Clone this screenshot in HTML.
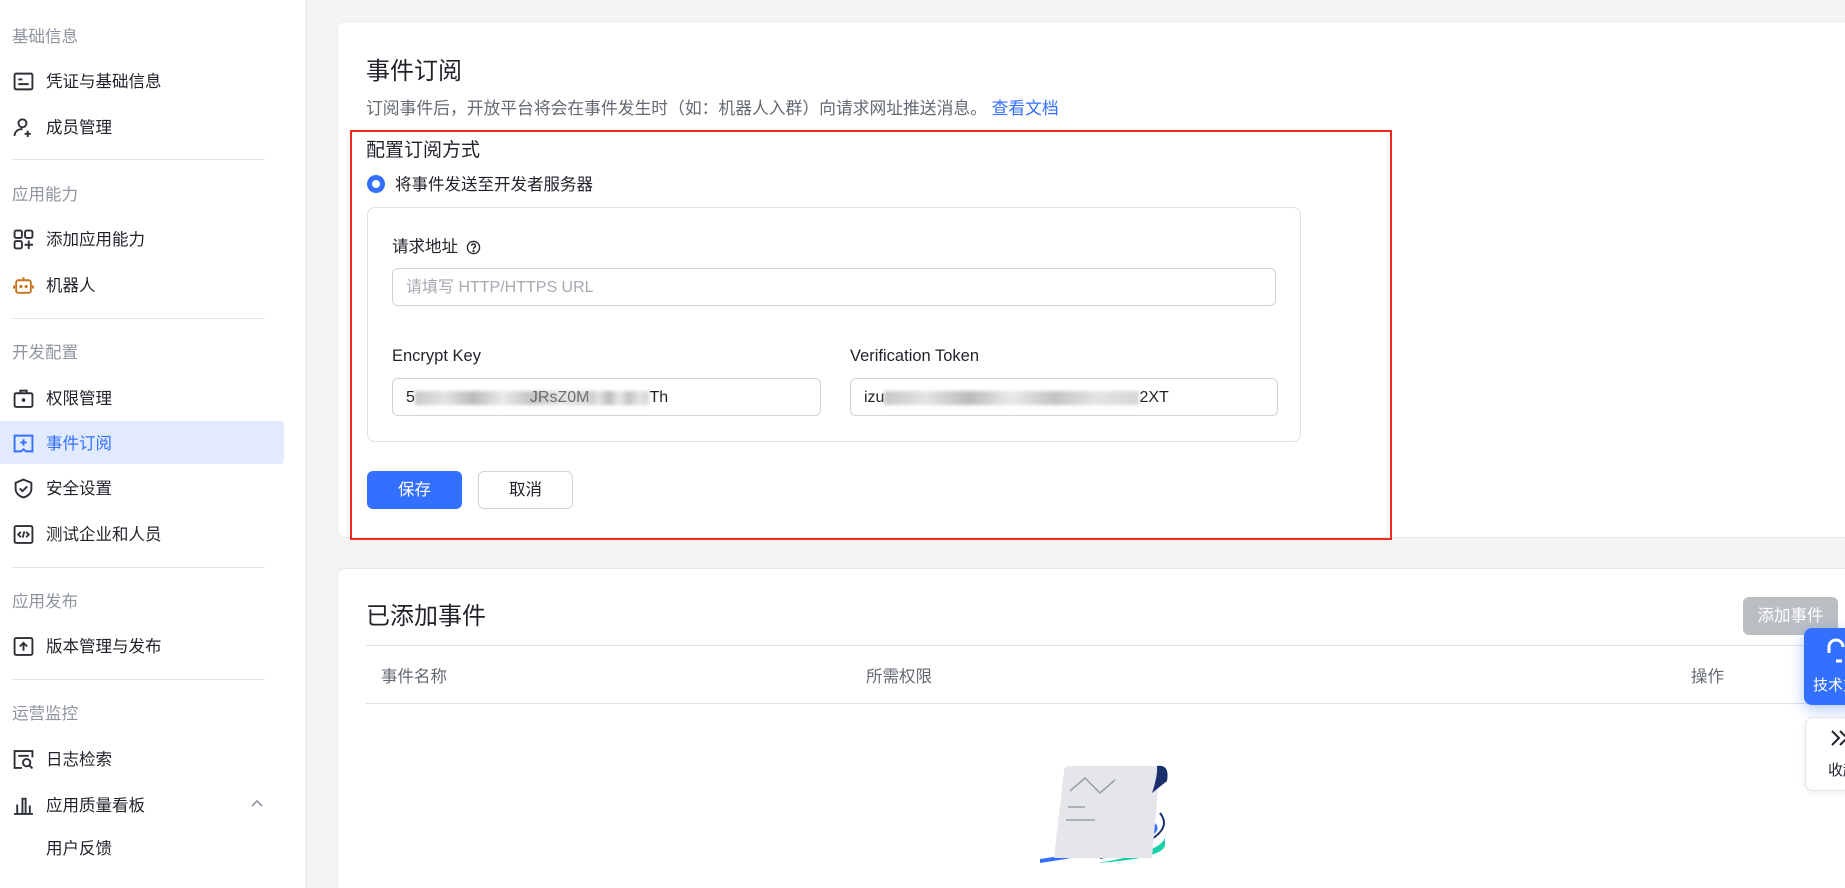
<!DOCTYPE html>
<html><head><meta charset="utf-8"><style>
*{margin:0;padding:0;box-sizing:border-box}
html,body{width:1845px;height:888px;overflow:hidden}
body{background:#f3f4f6;font-family:"Liberation Sans","Noto Sans CJK SC",sans-serif;color:#1f2329}
#root{position:relative;width:1845px;height:888px;overflow:hidden}
.abs{position:absolute}
#side{position:absolute;left:0;top:0;width:307px;height:888px;background:#fff;border-right:1px solid #e4e5e7}
.grp{position:absolute;left:12px;font-size:16.5px;color:#8f959e;line-height:20px}
.it{position:absolute;left:46px;font-size:16.5px;color:#1f2329;line-height:20px}
.ic{position:absolute;left:13px;width:21px;height:21px}
.div{position:absolute;left:12px;width:253px;height:1px;background:#e4e5e7}
.card{position:absolute;left:337px;width:1520px;background:#fff;border:1px solid #e8e9eb;border-radius:8px}
.inp{position:absolute;height:38px;border:1px solid #d0d3d6;border-radius:6px;background:#fff;font-size:16px;line-height:38px;padding-left:13px;color:#1f2329}
.blur{display:inline-block;height:14px;vertical-align:middle;background:linear-gradient(90deg,#bbb,#ddd,#aaa,#e5e5e5,#b5b5b5,#ddd,#ccc);filter:blur(1.5px);opacity:.8}
</style></head><body><div id="root">
<div id="side">
<div class="grp" style="top:27px">基础信息</div>
<svg class="ic" style="top:71px" viewBox="0 0 20 20" fill="none" stroke="#2b2f36" stroke-width="1.8"><rect x="1.5" y="2.5" width="17" height="15" rx="1.5"/><path d="M5 8h4M5 12.5h10"/></svg>
<div class="it" style="top:72px">凭证与基础信息</div>
<svg class="ic" style="top:117px" viewBox="0 0 20 20" fill="none" stroke="#2b2f36" stroke-width="1.8"><circle cx="9" cy="6" r="3.8"/><path d="M1.5 18c0-4 3-6.5 7.5-6.5M14 13v6M11 16h6"/></svg>
<div class="it" style="top:118px">成员管理</div>
<div class="div" style="top:159px"></div>
<div class="grp" style="top:185px">应用能力</div>
<svg class="ic" style="top:229px" viewBox="0 0 20 20" fill="none" stroke="#2b2f36" stroke-width="1.8"><rect x="1.5" y="1.5" width="7" height="7" rx="1.5"/><rect x="11.5" y="1.5" width="7" height="7" rx="1.5"/><rect x="1.5" y="11.5" width="7" height="7" rx="1.5"/><path d="M15 11v8M11 15h8"/></svg>
<div class="it" style="top:230px">添加应用能力</div>
<svg class="ic" style="top:275px" viewBox="0 0 20 20" fill="none" stroke="#c6731c" stroke-width="1.8"><rect x="3" y="5" width="14" height="12" rx="2"/><path d="M10 2v3M1 10v3M19 10v3"/><circle cx="7.5" cy="11" r=".6" fill="#c6731c"/><circle cx="12.5" cy="11" r=".6" fill="#c6731c"/></svg>
<div class="it" style="top:276px">机器人</div>
<div class="div" style="top:318px"></div>
<div class="grp" style="top:343px">开发配置</div>
<svg class="ic" style="top:388px" viewBox="0 0 20 20" fill="none" stroke="#2b2f36" stroke-width="1.8"><rect x="1.5" y="5" width="17" height="13" rx="1.5"/><path d="M7 5V2.5h6V5"/><circle cx="10" cy="11.5" r=".8" fill="#2b2f36"/></svg>
<div class="it" style="top:389px">权限管理</div>
<div class="abs" style="left:0;top:421px;width:284px;height:43px;background:#e1eaff;border-radius:0 4px 4px 0"></div>
<svg class="ic" style="top:433px" viewBox="0 0 20 20" fill="none" stroke="#3370ff" stroke-width="1.8"><path d="M1.5 2.5h17v15h-6l-2.5-2-2.5 2h-6z"/><path d="M10 6v6M7 9h6"/></svg>
<div class="it" style="top:434px;color:#3370ff">事件订阅</div>
<svg class="ic" style="top:478px" viewBox="0 0 20 20" fill="none" stroke="#2b2f36" stroke-width="1.8"><path d="M10 1.5l7.5 3v6c0 4-3.5 7-7.5 8-4-1-7.5-4-7.5-8v-6z"/><path d="M6.5 10l2.5 2.5 4.5-4.5"/></svg>
<div class="it" style="top:479px">安全设置</div>
<svg class="ic" style="top:524px" viewBox="0 0 20 20" fill="none" stroke="#2b2f36" stroke-width="1.8"><rect x="1.5" y="2" width="17" height="16" rx="1.5"/><path d="M7.5 7.5L5 10l2.5 2.5M12.5 7.5L15 10l-2.5 2.5M10.8 7l-1.6 6"/></svg>
<div class="it" style="top:525px">测试企业和人员</div>
<div class="div" style="top:567px"></div>
<div class="grp" style="top:592px">应用发布</div>
<svg class="ic" style="top:636px" viewBox="0 0 20 20" fill="none" stroke="#2b2f36" stroke-width="1.8"><rect x="1.5" y="2" width="17" height="16" rx="1.5"/><path d="M10 14V6.5M6.5 10l3.5-3.5 3.5 3.5"/></svg>
<div class="it" style="top:637px">版本管理与发布</div>
<div class="div" style="top:679px"></div>
<div class="grp" style="top:704px">运营监控</div>
<svg class="ic" style="top:749px" viewBox="0 0 20 20" fill="none" stroke="#2b2f36" stroke-width="1.8"><path d="M18.5 8V2h-17v16h7"/><path d="M5 6.5h10"/><circle cx="13" cy="13" r="3.5"/><path d="M15.5 15.5l3 3"/></svg>
<div class="it" style="top:750px">日志检索</div>
<svg class="ic" style="top:795px" viewBox="0 0 20 20" fill="none" stroke="#2b2f36" stroke-width="1.8"><path d="M1 18h18M4 18V9M9 18V3.5h3V18M16 18v-8"/></svg>
<div class="it" style="top:796px">应用质量看板</div>
<svg class="abs" style="left:250px;top:799px" width="14" height="10" viewBox="0 0 14 10" fill="none" stroke="#8f959e" stroke-width="1.6"><path d="M2 7l5-5 5 5"/></svg>
<div class="it" style="top:839px">用户反馈</div>
</div>

<div class="card" style="top:21px;height:517px"></div>
<div class="abs" style="left:366px;top:57px;font-size:24px;line-height:30px">事件订阅</div>
<div class="abs" style="left:366px;top:99px;font-size:16.8px;line-height:20px;color:#646a73">订阅事件后，开放平台将会在事件发生时（如：机器人入群）向请求网址推送消息。 <span style="color:#3370ff">查看文档</span></div>
<div class="abs" style="left:350px;top:130px;width:1042px;height:410px;border:2.5px solid #f02a1f"></div>
<div class="abs" style="left:366px;top:139px;font-size:19px;line-height:24px">配置订阅方式</div>
<div class="abs" style="left:367px;top:175px;width:18px;height:18px;border-radius:50%;border:5px solid #3370ff;background:#fff"></div>
<div class="abs" style="left:395px;top:175px;font-size:16.5px;line-height:20px">将事件发送至开发者服务器</div>
<div class="abs" style="left:367px;top:207px;width:934px;height:235px;border:1px solid #dee0e3;border-radius:8px"></div>
<div class="abs" style="left:392px;top:237px;font-size:16.5px;line-height:20px">请求地址</div>
<svg class="abs" style="left:466px;top:240px" width="15" height="15" viewBox="0 0 16 16" fill="none" stroke="#1f2329" stroke-width="1.4"><circle cx="8" cy="8" r="6.5"/><path d="M6 6.2a2 2 0 1 1 2.6 1.9c-.4.2-.6.5-.6 1V9.8"/><circle cx="8" cy="11.8" r=".5" fill="#1f2329"/></svg>
<div class="inp" style="left:392px;top:268px;width:884px;color:#a5a9b0">请填写 HTTP/HTTPS URL</div>
<div class="abs" style="left:392px;top:346px;font-size:16.5px;line-height:20px">Encrypt Key</div>
<div class="abs" style="left:850px;top:346px;font-size:16.5px;line-height:20px">Verification Token</div>
<div class="inp" style="left:392px;top:378px;width:429px">5<span class="blur" style="width:175px"></span><span style="opacity:.6;margin-left:-60px">JRsZ0M</span><span class="blur" style="width:60px"></span>Th</div>
<div class="inp" style="left:850px;top:378px;width:428px">izu<span class="blur" style="width:255px"></span>2XT</div>
<div class="abs" style="left:367px;top:471px;width:95px;height:38px;background:#3370ff;border-radius:6px;color:#fff;font-size:16.5px;line-height:38px;text-align:center">保存</div>
<div class="abs" style="left:478px;top:471px;width:95px;height:38px;background:#fff;border:1px solid #d0d3d6;border-radius:6px;font-size:16.5px;line-height:36px;text-align:center">取消</div>

<div class="card" style="top:568px;height:340px"></div>
<div class="abs" style="left:366px;top:602px;font-size:24px;line-height:30px">已添加事件</div>
<div class="abs" style="left:1743px;top:597px;width:95px;height:38px;background:#bbbfc4;border-radius:6px;color:#fff;font-size:16.5px;line-height:38px;text-align:center">添加事件</div>
<div class="abs" style="left:366px;top:645px;width:1480px;height:1px;background:#dee0e3"></div>
<div class="abs" style="left:366px;top:646px;width:1480px;height:58px;background:#fff;border-bottom:1px solid #dee0e3"></div>
<div class="abs" style="left:381px;top:667px;font-size:16.5px;line-height:20px;color:#646a73">事件名称</div>
<div class="abs" style="left:866px;top:667px;font-size:16.5px;line-height:20px;color:#646a73">所需权限</div>
<div class="abs" style="left:1691px;top:667px;font-size:16.5px;line-height:20px;color:#646a73">操作</div>

<svg class="abs" style="left:1040px;top:763px" width="135" height="100" viewBox="0 0 135 100">
<path d="M120 50 Q140 75 60 95" fill="none" stroke="#1a2f6e" stroke-width="2"/>
<path d="M115 60 Q135 80 0 100 L0 96 Q120 78 112 65z" fill="#3370ff"/>
<path d="M58 100 Q130 88 125 70 L125 80 Q128 95 58 100z" fill="#19d1a8"/>
<path d="M24 8 Q24 3 30 3 L120 3 L112 95 L14 95z" fill="#e4e6ea"/>
<path d="M117 3 Q130 1 127 18 L112 30 Q118 12 117 3z" fill="#1a2f6e"/>
<path d="M30 28 L45 15 L60 30 L75 17" fill="none" stroke="#9aa0a8" stroke-width="1.5"/>
<path d="M28 44 H45 M26 57 H55" stroke="#9aa0a8" stroke-width="1.5"/>
</svg>

<div class="abs" style="left:1804px;top:628px;width:60px;height:77px;background:#3370ff;border-radius:8px;box-shadow:0 4px 14px rgba(51,112,255,.4)"></div>
<svg class="abs" style="left:1826px;top:637px" width="20" height="28" viewBox="0 0 20 28" fill="none" stroke="#fff" stroke-width="3"><path d="M3 16V10a7 7 0 0 1 14 0"/><path d="M10 24h6"/></svg>
<div class="abs" style="left:1813px;top:676px;color:#fff;font-size:15px;line-height:20px;white-space:nowrap">技术支持</div>
<div class="abs" style="left:1805px;top:717px;width:60px;height:74px;background:#fff;border-radius:8px;border:1px solid #e4e5e7;box-shadow:0 2px 8px rgba(0,0,0,.08)"></div>
<svg class="abs" style="left:1830px;top:728px" width="20" height="20" viewBox="0 0 20 20" fill="none" stroke="#1f2329" stroke-width="2"><path d="M2 3l7 7-7 7M10 3l7 7-7 7"/></svg>
<div class="abs" style="left:1828px;top:761px;font-size:15px;line-height:20px;white-space:nowrap">收起</div>
</div></body></html>
